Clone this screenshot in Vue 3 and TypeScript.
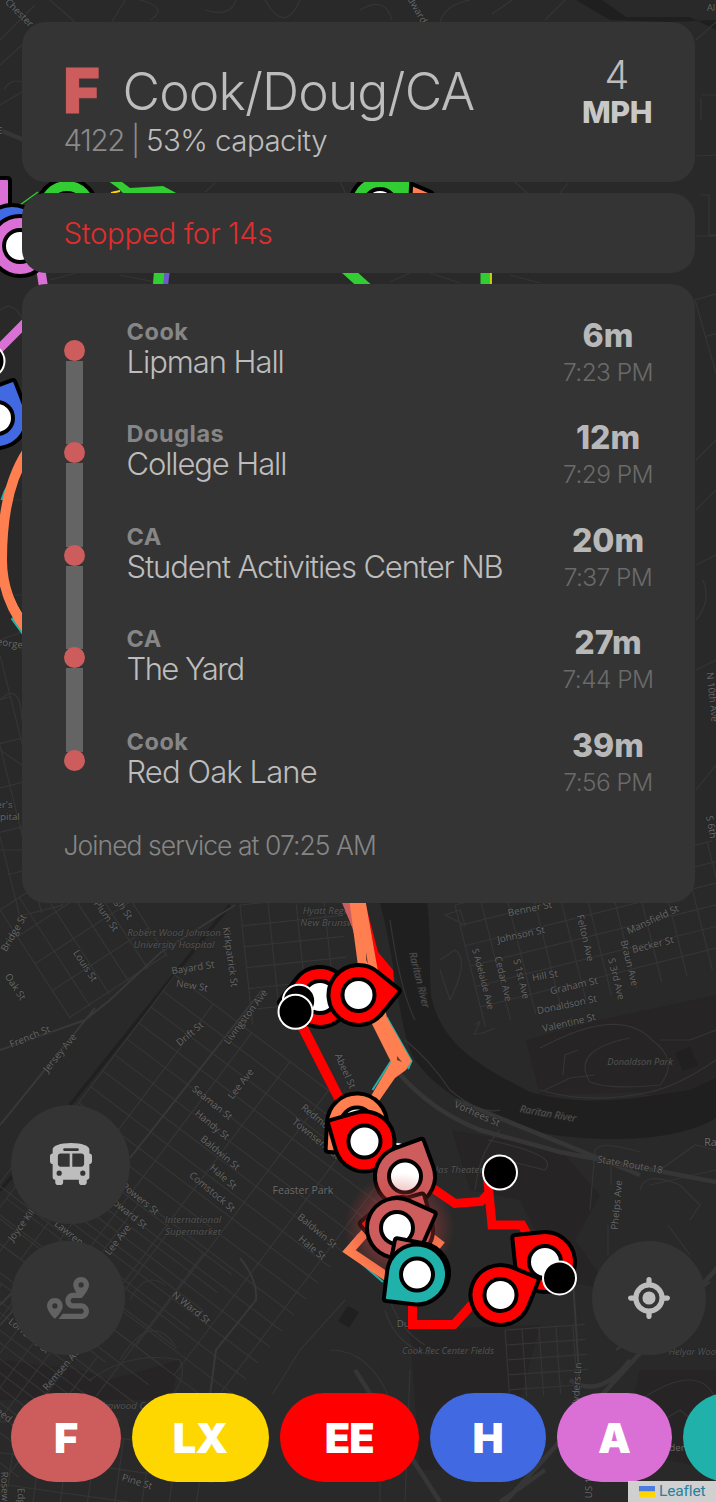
<script setup lang="ts">
interface Stop { campus: string; name: string; eta: string; time: string; ls: number }
interface Pin { x: number; y: number; angle: number; color: string }
interface Label { t: string; x: number; y: number; r?: number; s?: number; kind?: string }
interface Pill { name: string; width: number; color: string }

const RED = '#ff0000'
const ROSE = '#cd5c5c'
const CORAL = '#ff7f50'
const TEAL = '#20b2aa'
const GREEN = '#32cd32'
const ORCHID = '#da70d6'
const BLUE = '#4169e1'

const stops: Stop[] = [
  { campus: 'Cook', name: 'Lipman Hall', eta: '6m', time: '7:23 PM', ls: -0.034 },
  { campus: 'Douglas', name: 'College Hall', eta: '12m', time: '7:29 PM', ls: -0.036 },
  { campus: 'CA', name: 'Student Activities Center NB', eta: '20m', time: '7:37 PM', ls: -0.036 },
  { campus: 'CA', name: 'The Yard', eta: '27m', time: '7:44 PM', ls: -0.05 },
  { campus: 'Cook', name: 'Red Oak Lane', eta: '39m', time: '7:56 PM', ls: -0.029 },
]

const pills: Pill[] = [
  { name: 'F', width: 109.5, color: ROSE },
  { name: 'LX', width: 137, color: '#ffd700' },
  { name: 'EE', width: 139.5, color: RED },
  { name: 'H', width: 115.5, color: BLUE },
  { name: 'A', width: 115, color: ORCHID },
  { name: 'B', width: 115, color: TEAL },
]

// Teardrop pin whose pointed corner sits at the top right before rotation
const drop = 'M-30 0A30 30 0 0 1 0 -30L27 -30Q30 -30 30 -27L30 0A30 30 0 0 1 -30 0Z'

const topPins: Pin[] = [
  { x: 67, y: 209, angle: 90, color: GREEN },
  { x: 394, y: 209, angle: -22, color: CORAL },
  { x: 380, y: 205, angle: -42, color: GREEN },
  { x: -20, y: 208, angle: -45, color: ORCHID },
  { x: 12, y: 235, angle: 180, color: BLUE },
  { x: 20, y: 246, angle: 180, color: ORCHID },
  { x: -3, y: 418, angle: -66, color: BLUE },
]
const lowerPins: Pin[] = [
  { x: 357, y: 1123.5, angle: 138, color: CORAL },
  { x: 364.5, y: 1141.5, angle: 209, color: RED },
]
const underGlow: Pin[] = [
  { x: 405, y: 1176.5, angle: -65, color: ROSE },
  { x: 401, y: 1227, angle: 185, color: RED },
  { x: 403, y: 1230, angle: -61, color: ROSE },
]
const overGlow: Pin[] = [
  { x: 397, y: 1228, angle: -21, color: ROSE },
  { x: 419, y: 1273, angle: -124, color: ROSE },
  { x: 417, y: 1274.5, angle: 142, color: TEAL },
  { x: 545, y: 1262, angle: -141, color: RED },
  { x: 500.5, y: 1295, angle: -23, color: RED },
]

const labels: Label[] = [
  { t: 'Robert Wood Johnson', x: 174, y: 936, kind: 'poi' },
  { t: 'University Hospital', x: 174, y: 948, kind: 'poi' },
  { t: 'Hyatt Regency', x: 333, y: 914, kind: 'poi' },
  { t: 'New Brunswick', x: 333, y: 926, kind: 'poi' },
  { t: 'International', x: 193, y: 1223, kind: 'poi' },
  { t: 'Supermarket', x: 193, y: 1235, kind: 'poi' },
  { t: 'Cook Rec Center Fields', x: 448, y: 1354, s: 9.3, kind: 'poi' },
  { t: 'Helyar Woods', x: 697, y: 1355, s: 9.3, kind: 'poi' },
  { t: 'Donaldson Park', x: 640, y: 1065, s: 9.3, kind: 'poi' },
  { t: 'Nicholas Theater', x: 447, y: 1173, kind: 'poi' },
  { t: 'Elmwood Cem', x: 128, y: 1409, kind: 'poi' },
  { t: 'Raritan River', x: 419, y: 983, r: 76, s: 10, kind: 'poi' },
  { t: 'Raritan River', x: 548, y: 1117, r: 10, s: 10, kind: 'poi' },
  { t: 'Feaster Park', x: 303, y: 1194, s: 10.5, kind: 'place' },
  { t: 'Raritan', x: 722, y: 1146, s: 10.5, kind: 'place' },
  { t: 'Bayard St', x: 193, y: 971, r: -9 },
  { t: 'New St', x: 192, y: 989, r: 9 },
  { t: 'Kirkpatrick St', x: 230, y: 960, r: 82 },
  { t: 'Plum St', x: 106, y: 919, r: 55 },
  { t: 'High St', x: 121, y: 908, r: 55 },
  { t: 'Louis St', x: 85, y: 969, r: 57 },
  { t: 'Oak St', x: 15, y: 990, r: 57 },
  { t: 'Bridge St', x: 14, y: 936, r: -60 },
  { t: 'French St', x: 30, y: 1040, r: -22 },
  { t: 'Jersey Ave', x: 60, y: 1056, r: -51 },
  { t: 'Drift St', x: 190, y: 1037, r: -40 },
  { t: 'Livingston Ave', x: 246, y: 1020, r: -53 },
  { t: 'Seaman St', x: 212, y: 1106, r: 39 },
  { t: 'Handy St', x: 212, y: 1128, r: 39 },
  { t: 'Baldwin St', x: 220, y: 1156, r: 40 },
  { t: 'Lee Ave', x: 241, y: 1087, r: -52 },
  { t: 'Hale St', x: 223, y: 1180, r: 41 },
  { t: 'Comstock St', x: 212, y: 1195, r: 40 },
  { t: 'Powers St', x: 140, y: 1202, r: 39 },
  { t: 'Howard St', x: 127, y: 1215, r: 39 },
  { t: 'Lee Ave', x: 118, y: 1243, r: -52 },
  { t: 'Joyce Kilmer', x: 27, y: 1221, r: -53 },
  { t: 'Lawrence St', x: 77, y: 1243, r: 39 },
  { t: 'Lorraine St', x: 29, y: 1339, r: 39 },
  { t: 'Remsen Ave', x: 63, y: 1371, r: -50 },
  { t: 'N Ward St', x: 191, y: 1311, r: 39 },
  { t: 'Abeel St', x: 345, y: 1074, r: 66 },
  { t: 'Redmond St', x: 324, y: 1127, r: 39 },
  { t: 'Townsend St', x: 316, y: 1142, r: 39 },
  { t: 'Baldwin St', x: 317, y: 1234, r: 40 },
  { t: 'Hale St', x: 312, y: 1251, r: 40 },
  { t: 'Dudley Rd', x: 420, y: 1327 },
  { t: 'Vorhees St', x: 477, y: 1117, r: 24 },
  { t: 'State Route 18', x: 630, y: 1168, r: 10 },
  { t: 'Phelps Ave', x: 617, y: 1208, r: -85 },
  { t: 'Benner St', x: 530, y: 912, r: -11 },
  { t: 'Johnson St', x: 521, y: 938, r: -12 },
  { t: 'Mansfield St', x: 653, y: 923, r: -25 },
  { t: 'Becker St', x: 653, y: 948, r: -14 },
  { t: 'Felton Ave', x: 585, y: 941, r: 77 },
  { t: 'Braun Ave', x: 629, y: 966, r: 76 },
  { t: 'S 3rd Ave', x: 616, y: 982, r: 76 },
  { t: 'S 1st Ave', x: 521, y: 982, r: 76 },
  { t: 'Cedar Ave', x: 503, y: 982, r: 76 },
  { t: 'S Adelaide Ave', x: 483, y: 982, s: 9.2, r: 75 },
  { t: 'Hill St', x: 545, y: 979, r: -10 },
  { t: 'Graham St', x: 574, y: 989, r: -13 },
  { t: 'Donaldson St', x: 567, y: 1008, r: -12 },
  { t: 'Valentine St', x: 569, y: 1026, r: -13 },
  { t: 'Chester', x: 19, y: 16, r: 45 },
  { t: 'Landward', x: 413, y: 6, r: 60 },
  { t: 'Al', x: 711, y: 11 },
  { t: 'E', x: 0, y: 134 },
  { t: 'George St', x: 12, y: 647, r: 8 },
  { t: "Peter's", x: -3, y: 808 },
  { t: 'Hospital', x: 1, y: 820 },
  { t: 'N 10th Ave', x: 712, y: 700, r: 84 },
  { t: 'S 6th', x: 711, y: 830, r: 80 },
  { t: 'Pine St', x: 137, y: 1485, r: 17 },
  { t: 'Rosewood St', x: 5, y: 1504, r: 88 },
  { t: 'Edgar', x: 21, y: 1504, r: 88 },
  { t: 'Reed St', x: 6, y: 1420, r: 38 },
  { t: 'Ryders Ln', x: 577, y: 1388, r: -86 },
  { t: 'US 1', x: 589, y: 1491, r: -88 },
  { t: 'Gardens', x: 672, y: 1451 },
]

interface Grid { x: number; y: number; a: number; w: number; h: number; dx: number; dy: number }
const grids: Grid[] = [
  { x: 0, y: 910, a: -33, w: 115, h: 130, dx: 23, dy: 32 },
  { x: 175, y: 975, a: 37, w: 300, h: 320, dx: 48, dy: 20 },
  { x: 40, y: 1130, a: 37, w: 240, h: 230, dx: 41, dy: 23 },
  { x: -30, y: 1260, a: 37, w: 170, h: 200, dx: 40, dy: 24 },
  { x: 455, y: 905, a: -14, w: 265, h: 125, dx: 26, dy: 21 },
  { x: 240, y: 905, a: -6, w: 100, h: 120, dx: 28, dy: 21 },
  { x: 505, y: 1330, a: -4, w: 80, h: 68, dx: 17, dy: 15 },
  { x: -10, y: 1420, a: 8, w: 230, h: 90, dx: 27, dy: 31 },
  { x: 0, y: 655, a: 76, w: 260, h: 46, dx: 43, dy: 22 },
  { x: 695, y: 300, a: -16, w: 40, h: 360, dx: 30, dy: 38 },
]
function gridPath(g: Grid): string {
  const p: string[] = []
  for (let x = 0; x <= g.w; x += g.dx) p.push(`M${x} 0V${g.h}`)
  for (let y = 0; y <= g.h; y += g.dy) p.push(`M0 ${y}H${g.w}`)
  return p.join('')
}
</script>

<template>
  <main class="screen">
    <svg class="map" viewBox="0 0 716 1502" width="716" height="1502">
      <defs>
        <radialGradient id="glow">
          <stop offset="0" stop-color="#cd4040" stop-opacity=".5" />
          <stop offset=".6" stop-color="#cd4040" stop-opacity=".36" />
          <stop offset="1" stop-color="#cd4040" stop-opacity="0" />
        </radialGradient>
      </defs>
      <rect width="716" height="1502" fill="#292929" />
      <g fill="#262424">
        <path d="M526 1040L600 1020L716 995V1115L640 1092L540 1095Z" />
        <path d="M452 1130L560 1150L600 1195L575 1240L610 1290L560 1280L520 1200L470 1190Z" />
        <path d="M410 1330L540 1325L520 1400L470 1470H420Z" />
        <path d="M0 1360L80 1370L110 1380L180 1360L170 1400H0Z" />
        <path d="M640 1370H716V1470L620 1450Z" />
      </g>
      <path fill="#1f1f1f" d="M380 903H427C432 940 428 975 432 1000C442 1040 470 1062 530 1092C585 1108 640 1098 690 1090L716 1078V1118C680 1140 620 1142 560 1136C500 1128 440 1096 415 1060C398 1030 398 970 380 903Z" />
      <path fill="#1f1f1f" d="M576 0H602L626 17H690L716 30V20L670 22L610 20Z" />
      <path fill="#202020" d="M675 1053L690 1047L698 1065L683 1071Z M348 1306L359 1312L349 1328L338 1321Z" />
      <path class="rail" d="M230 905L70 1105M0 1190L18 1170" />
      <g class="streets">
        <path v-for="(g, i) in grids" :key="i" :d="gridPath(g)" :transform="`translate(${g.x} ${g.y}) rotate(${g.a})`" />
        <path d="M0 40L35 5M0 65L22 45M0 105L22 92M4 90Q10 78 22 82M50 0L75 22M125 0L112 22M140 0Q170 8 150 20M205 10Q230 18 236 0M265 0Q285 35 300 0M360 10Q385 -5 392 20M440 22Q445 5 470 0M492 14L512 0M545 20L565 0M340 182L346 194M205 192L215 183M515 182L528 194M560 193L568 183" />
        <path d="M696 40L716 22M701 95H716M701 120V98M696 156L716 155M700 195H709V235H716M696 236H716M50 280L80 272M120 275L160 283M390 282L410 273M430 273L460 283M510 275L540 283" />
        <path d="M0 310Q12 300 22 318M0 500H22M0 595H22M0 640L22 632M0 700Q20 680 22 720M0 750L22 765M0 850H22M696 460L716 440M696 510L716 490M696 565L716 555M696 620Q712 600 703 580M696 670L716 660M696 790L716 765" />
        <path d="M475 1025Q485 1015 474 1034Q480 1035 495 1028M540 1048Q620 1005 652 1040Q680 1060 660 1085Q610 1090 590 1082Q570 1050 630 1038M540 1090Q590 1105 650 1092Q680 1085 716 1060M563 1075L565 1055L578 1050M545 1090L570 1078L595 1075M660 1040L690 1040L716 1030" />
        <path d="M590 1210L595 1150Q600 1140 640 1152M488 1140Q560 1155 545 1170L505 1160M640 1190Q645 1170 680 1185L700 1205L690 1220M650 1185L716 1170M668 1225L690 1255M611 1160V1185M608 1225V1255M660 1170L695 1145L716 1150M475 1190Q480 1150 500 1130" />
        <path d="M120 1360Q150 1310 175 1345M130 1300Q145 1270 165 1285M90 1380Q130 1350 180 1360Q190 1380 160 1410M390 1300Q400 1330 425 1345M385 1310Q395 1345 430 1355M272 1395L300 1350L345 1300M340 1400L380 1440V1502M405 1502L410 1370M640 1400Q700 1360 716 1400M655 1425L680 1410L716 1440M280 1440L310 1480L340 1460M330 1350Q370 1350 390 1400" />
        <path d="M405 1040Q430 1060 450 1090Q480 1115 500 1110M390 920Q400 990 415 1020M440 960L455 950Q470 960 450 1000L440 970M445 915L460 910L465 925Z" />
      </g>
      <g class="roads">
        <path d="M0 1050L85 1020L110 1000L160 953L235 905M0 1125L95 1008M130 1158L262 990M0 1325L32 1290M210 1395L216 1350L256 1300Q258 1280 240 1258M0 1305L40 1265M573 1280L580 1390M616 1350L710 1282" />
        <path class="wide" d="M398 1072Q430 1110 480 1130L560 1152L716 1182M455 1100L640 1175" />
        <path class="wide" d="M505 1502L720 1265M545 1470L500 1502M355 1370L440 1502M570 1380Q600 1400 630 1360M-5 128L24 140" />
      </g>
      <g class="labels">
        <text v-for="(l, i) in labels" :key="i" :class="l.kind" :x="0" :y="3" :font-size="l.s ?? 9.8" :transform="`translate(${l.x} ${l.y - 3}) rotate(${l.r ?? 0})`">{{ l.t }}</text>
      </g>

      <!-- upper routes -->
      <path :fill="GREEN" d="M104 178L122 182L130 188L163 186L178 194H124L118 188Z" />
      <g fill="none">
        <path :stroke="GREEN" stroke-width="1.5" d="M20 205L38 192" />
        <path stroke="#ffd700" stroke-width="2" d="M111 193L120 191" />
        <path :stroke="ORCHID" stroke-width="9" d="M40 265L44 290M-2 350L26 322" />
        <path :stroke="GREEN" stroke-width="11" d="M160 265L158 290M338 262L369 290M486 265V290" />
        <path stroke="#6a5acd" stroke-width="5" d="M168 265L165 290" />
        <path stroke="#ffd700" stroke-width="1.5" d="M491 265V290" />
        <path :stroke="TEAL" stroke-width="3" d="M24 466Q6 484 2 500M12 618L25 636" />
        <path stroke="#ffd700" stroke-width="3" d="M5 575Q10 598 22 616" />
        <path :stroke="CORAL" stroke-width="10" d="M27 452Q2 490 2 560Q2 598 27 630" />
      </g>

      <!-- lower routes -->
      <path :fill="ROSE" d="M340 898H352L356 940L352 927Z" />
      <path :fill="RED" d="M364 898L378 952L393 970L394 982L375 975Z" />
      <g fill="none">
        <path :stroke="RED" stroke-width="10" d="M298 1018L345 1110" />
        <path :stroke="TEAL" stroke-width="2" d="M386.500 1017L411.500 1061L408 1069M391 1061L372.500 1090M359 1234L346 1250L383 1282" />
      </g>
      <path :fill="CORAL" d="M349 898H365L377 966L387 1018L411.500 1061L406 1070L395 1078L379 1101L371 1096L391 1062L372 1024L358 966Z" />
      <path fill="#6b3b2c" d="M397 1056L402 1062L397 1060ZM366 952L368 964L366 960Z" />
      <g fill="none">
        <path :stroke="CORAL" stroke-width="9" d="M372 1225L349 1251L392 1280M424 1232L442 1246" />
        <path :stroke="RED" stroke-width="9" d="M428 1185L455 1203.500L481 1201.500L488 1194M487 1172L492 1225H522L532 1243M412.500 1296V1324.500H454L485 1290" />
      </g>
      <circle cx="396" cy="1161" r="17" fill="#000" stroke="#fff" stroke-width="2" />

      <g v-for="(p, i) in topPins" :key="'t' + i" :transform="`translate(${p.x} ${p.y})`">
        <path class="pin" :d="drop" :fill="p.color" :transform="`rotate(${p.angle + 45})`" />
        <circle class="eye" r="16" />
      </g>
      <circle cx="-12" cy="361" r="16.500" fill="#000" stroke="#fff" stroke-width="2" />

      <g transform="translate(320 997)">
        <path class="pin" :d="drop" :fill="RED" transform="rotate(217)" />
        <circle class="eye" r="16" />
      </g>
      <circle class="stop" cx="299" cy="1001" r="16.200" />
      <g transform="translate(358.500 995)">
        <path class="pin" :d="drop" :fill="RED" transform="rotate(39)" />
        <circle class="eye" r="16" />
      </g>
      <circle class="stop" cx="295.500" cy="1011.700" r="17" />
      <circle class="stop" cx="500" cy="1172.500" r="17" />

      <g v-for="(p, i) in lowerPins" :key="'l' + i" :transform="`translate(${p.x} ${p.y})`">
        <path class="pin" :d="drop" :fill="p.color" :transform="`rotate(${p.angle + 45})`" />
        <circle class="eye" r="16" />
      </g>
      <g v-for="(p, i) in underGlow" :key="'u' + i" :transform="`translate(${p.x} ${p.y})`">
        <path class="pin" :d="drop" :fill="p.color" :transform="`rotate(${p.angle + 45})`" />
        <circle class="eye" r="16" />
      </g>
      <circle cx="399" cy="1228" r="55" fill="url(#glow)" />
      <g v-for="(p, i) in overGlow" :key="'o' + i" :transform="`translate(${p.x} ${p.y})`">
        <path class="pin" :d="drop" :fill="p.color" :transform="`rotate(${p.angle + 45})`" />
        <circle class="eye" r="16" />
      </g>
      <circle class="stop" cx="559.500" cy="1278" r="16.500" />
    </svg>

    <section class="panels">
      <header class="card head">
        <div class="bus">
          <div class="title"><b>F</b><span>Cook/Doug/CA</span></div>
          <div class="meta"><span class="num">4122 |</span><span class="cap">53% capacity</span></div>
        </div>
        <div class="speed"><span class="mph-value">4</span><span class="mph">MPH</span></div>
      </header>
      <div class="card stopped">Stopped for 14s</div>
      <div class="card route">
        <div v-for="s in stops" :key="s.name" class="row">
          <div class="track"><i class="dot"></i><i class="bar"></i></div>
          <div class="place">
            <span class="campus">{{ s.campus }}</span>
            <span class="name" :style="{ letterSpacing: s.ls + 'em' }">{{ s.name }}</span>
          </div>
          <div class="when"><span class="eta">{{ s.eta }}</span><span class="time">{{ s.time }}</span></div>
        </div>
        <div class="joined">Joined service at 07:25 AM</div>
      </div>
    </section>

    <section class="bottom">
      <div class="controls">
        <div class="left">
          <button class="round big" aria-label="Buses">
            <svg viewBox="32 0 512 512" width="42" height="42" fill="#bdbdbd"><path d="M288 0C422.400 0 512 35.200 512 80V128c17.700 0 32 14.300 32 32v64c0 17.700-14.300 32-32 32V416c0 17.700-14.300 32-32 32v32c0 17.700-14.300 32-32 32H416c-17.700 0-32-14.300-32-32V448H192v32c0 17.700-14.300 32-32 32H128c-17.700 0-32-14.300-32-32V448c-17.700 0-32-14.300-32-32V256c-17.700 0-32-14.300-32-32V160c0-17.700 14.300-32 32-32V80C64 35.200 153.600 0 288 0zM128 160v96c0 17.700 14.300 32 32 32H272V128H160c-17.700 0-32 14.300-32 32zM304 288H416c17.700 0 32-14.300 32-32V160c0-17.700-14.300-32-32-32H304V288zM144 400a32 32 0 1 0 0-64 32 32 0 1 0 0 64zm288 0a32 32 0 1 0 0-64 32 32 0 1 0 0 64zM384 80c0-8.800-7.200-16-16-16H208c-8.800 0-16 7.200-16 16s7.200 16 16 16H368c8.800 0 16-7.200 16-16z" /></svg>
          </button>
          <button class="round" aria-label="Routes">
            <svg viewBox="0 0 512 512" width="42" height="42" fill="#626262"><path d="M512 96c0 50.200-59.100 125.100-84.600 155c-3.800 4.400-9.400 6.100-14.500 5H320c-17.700 0-32 14.300-32 32s14.300 32 32 32h96c53 0 96 43 96 96s-43 96-96 96H139.600c8.700-9.900 19.300-22.600 30-36.800c6.300-8.400 12.800-17.600 19-27.200H416c17.700 0 32-14.300 32-32s-14.300-32-32-32H320c-53 0-96-43-96-96s43-96 96-96h39.800c-21-31.500-39.800-67.700-39.800-96c0-53 43-96 96-96s96 43 96 96zM117.100 489.100c-3.800 4.300-7.200 8.100-10.100 11.300l-1.800 2-.2-.2c-6 4.600-14.600 4-20-1.800C59.800 473 0 402.500 0 352c0-53 43-96 96-96s96 43 96 96c0 30-21.100 67-43.500 97.900c-10.700 14.700-21.700 28-30.800 38.500l-.6 .7zM128 352a32 32 0 1 0 -64 0 32 32 0 1 0 64 0zM416 128a32 32 0 1 0 0-64 32 32 0 1 0 0 64z" /></svg>
          </button>
        </div>
        <button class="round" aria-label="Locate">
          <svg viewBox="0 0 512 512" width="42" height="42" fill="#bdbdbd"><path d="M256 0c17.700 0 32 14.300 32 32V66.700C368.400 80.100 431.900 143.600 445.300 224H480c17.700 0 32 14.300 32 32s-14.300 32-32 32H445.300C431.900 368.400 368.400 431.900 288 445.300V480c0 17.700-14.300 32-32 32s-32-14.300-32-32V445.300C143.600 431.900 80.100 368.400 66.700 288H32c-17.700 0-32-14.300-32-32s14.300-32 32-32H66.700C80.100 143.600 143.600 80.100 224 66.700V32c0-17.700 14.300-32 32-32zM128 256a128 128 0 1 0 256 0 128 128 0 1 0 -256 0zm128-80a80 80 0 1 1 0 160 80 80 0 1 1 0-160z" /></svg>
        </button>
      </div>
      <nav class="pills">
        <button v-for="p in pills" :key="p.name" class="pill" :style="{ width: p.width + 'px', background: p.color }">{{ p.name }}</button>
      </nav>
    </section>

    <footer class="attribution">
      <svg width="16" height="11" viewBox="0 0 16 11"><path fill="#4c7be1" d="M0 0h16v5.500H0z" /><path fill="#ffd500" d="M0 5.500h16V11H0z" /></svg>
      <span>Leaflet</span>
    </footer>
  </main>
</template>

<style>
html, body { margin: 0; background: #292929; overflow: hidden; }
</style>

<style scoped>
.screen {
  position: relative;
  width: 716px;
  height: 1502px;
  overflow: hidden;
  display: flex;
  flex-direction: column;
  justify-content: space-between;
  font-family: Inter, "Liberation Sans", sans-serif;
  font-weight: 300;
  color: #bdbdbd;
}
.map { position: absolute; inset: 0; }
.streets { fill: none; stroke: #353535; stroke-width: 1.2; }
.roads { fill: none; stroke: #383838; stroke-width: 2; }
.roads .wide { stroke-width: 4.5; stroke: #363636; }
.rail { fill: none; stroke: #202020; stroke-width: 3.5; }
.labels { font-family: "Open Sans", "Liberation Sans", sans-serif; font-weight: 400; text-anchor: middle; fill: #666; stroke: #262626; stroke-width: 1.5px; paint-order: stroke; }
.labels .poi { font-style: italic; fill: #545454; }
.labels .place { fill: #6c6c6c; font-weight: 500; }
.pin { stroke: #000; stroke-width: 4; stroke-linejoin: round; }
.eye { fill: #fff; stroke: #000; stroke-width: 4; }
.stop { fill: #000; stroke: #fff; stroke-width: 2; }

.panels { position: relative; display: flex; flex-direction: column; gap: 11px; padding: 21.5px 21.5px 0 22px; }
.card { box-sizing: border-box; background: #343434; border-radius: 24px; padding: 0 42.5px 0 41.5px; white-space: nowrap; }
.head { height: 160.5px; display: flex; justify-content: space-between; padding-top: 32px; }
.bus { display: flex; flex-direction: column; }
.title { display: flex; align-items: flex-start; height: 71px; }
.title b { font-size: 62px; line-height: 74px; font-weight: 900; color: #cd5c5c; width: 59px; -webkit-text-stroke: 1px #cd5c5c; }
.title span { font-size: 51.5px; line-height: 74px; letter-spacing: -0.0163em; }
.meta { display: flex; gap: 7px; font-size: 29.5px; line-height: 30px; letter-spacing: -0.019em; }
.num { color: #8a8a8a; letter-spacing: -0.045em; }
.speed { display: flex; flex-direction: column; align-items: center; width: 70px; padding-top: 1px; }
.mph-value { font-size: 39.500px; line-height: 41px; }
.mph { font-size: 30.5px; line-height: 32px; font-weight: 800; letter-spacing: -0.018em; color: #c8c8c8; }
.stopped { height: 80px; line-height: 81px; font-size: 29.5px; letter-spacing: -0.013em; color: #e02d2d; }
.route { height: 619px; padding-top: 31.500px; }
.row { display: flex; height: 102.500px; }
.track { width: 21px; display: flex; flex-direction: column; align-items: center; padding-top: 24px; flex: none; }
.dot { width: 21px; height: 21px; border-radius: 50%; background: #cd5c5c; flex: none; position: relative; z-index: 1; }
.bar { width: 17px; height: 83.500px; background: #646464; flex: none; }
.row:nth-child(5) .bar { display: none; }
.place { flex: 1; display: flex; flex-direction: column; padding-left: 42px; }
.campus { font-size: 23.5px; font-weight: 700; line-height: 31px; letter-spacing: 0.023em; color: #868686; }
.name { font-size: 31px; line-height: 29.500px; }
.when { display: flex; flex-direction: column; align-items: center; width: 88px; }
.eta { font-size: 32px; line-height: 40px; font-weight: 800; letter-spacing: 0; color: #b8b8b8; }
.time { font-size: 24.5px; line-height: 32px; letter-spacing: -0.024em; color: #6a6a6a; }
.joined { font-size: 26.5px; line-height: 34px; letter-spacing: -0.036em; color: #868686; }

.bottom { position: relative; display: flex; flex-direction: column; gap: 38px; padding: 0 0 20px 11px; }
.controls { display: flex; justify-content: space-between; align-items: flex-end; padding-right: 10px; }
.left { display: flex; flex-direction: column; gap: 17.500px; }
button { border: 0; padding: 0; margin: 0; font: inherit; }
.round { width: 114px; height: 114px; border-radius: 50%; background: #343434; display: flex; align-items: center; justify-content: center; }
.round.big { width: 119px; height: 119px; }
.pills { display: flex; gap: 11px; }
.pill { flex: none; height: 89px; border-radius: 44.500px; color: #fff; font-size: 41.5px; font-weight: 900; letter-spacing: -0.02em; }
.attribution { position: absolute; right: 0; bottom: 0; box-sizing: border-box; width: 88px; height: 21px; display: flex; align-items: center; gap: 4px; padding-left: 11px; background: rgba(222, 222, 222, 0.92); font: 400 15.5px/21px Roboto, "Noto Sans", sans-serif; letter-spacing: -0.01em; color: #27809f; }
</style>
